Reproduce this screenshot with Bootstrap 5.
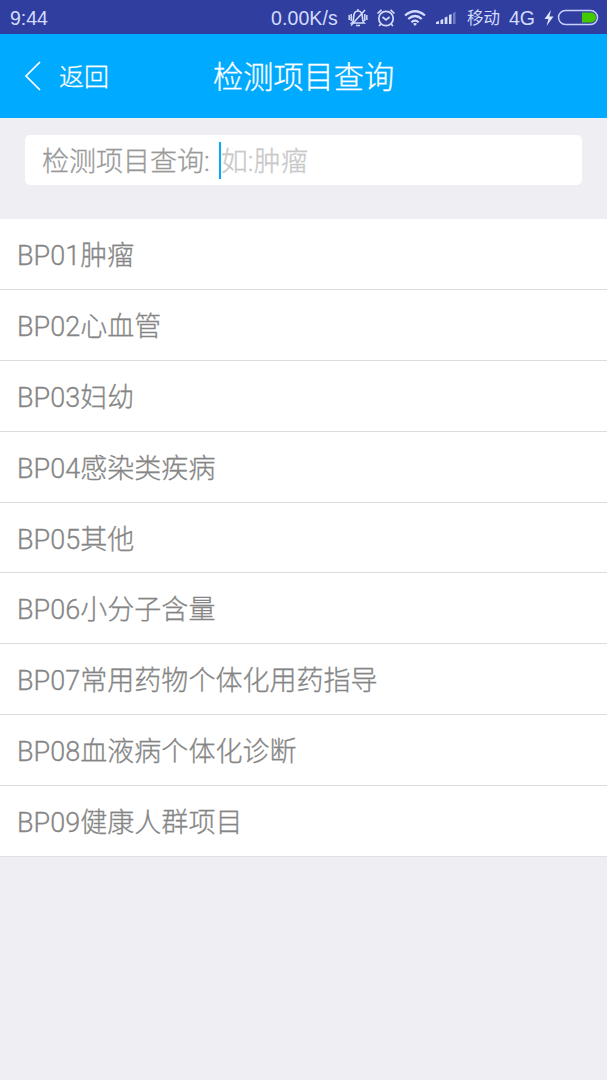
<!DOCTYPE html>
<html lang="zh-CN">
<head>
<meta charset="utf-8">
<meta name="viewport" content="width=device-width, initial-scale=1">
<title>检测项目查询</title>
<link href="https://cdn.jsdelivr.net/npm/bootstrap@5.3.0/dist/css/bootstrap.min.css" rel="stylesheet">
<style>
  body { background: #eeeef3; font-family: Roboto, "Noto Sans CJK SC", sans-serif; min-height: 100vh; font-weight: 300; overflow: hidden; -webkit-text-stroke: .3px currentColor; }
  .status { height: 34px; background: #303f9f; color: #d3dbff; font-size: 19.5px; line-height: 34px; font-weight: 400; padding: 1px 8px 0 10px; -webkit-text-stroke: 0; }
  .status svg { flex: none; }
  .clock, .speed, .net { font-family: "Liberation Sans", sans-serif; white-space: nowrap; }
  .speed { width: 67px; margin-right: 10px; letter-spacing: .1px; }
  .carrier { font-size: 16.5px; margin: 0 9px 0 11px; padding-top: 2px; }
  .net { width: 26px; margin-right: 9px; }
  .topbar { height: 84px; background: #00aaff; color: #fff; }
  .back { width: 200px; padding-left: 24px; font-size: 25px; }
  .back span { margin: 3px 0 0 17px; }
  .heading { font-size: 30.2px; margin-left: 13px; padding-top: 4px; }
  .search-area { height: 101px; padding: 17px 25px 0; }
  .search-box { height: 50px; border-radius: 5px; padding-left: 17px; font-size: 27px; color: #999; line-height: 50px; }
  .search-box .label-text, .search-box .hint { padding-top: 4px; }
  .caret { width: 2px; height: 37px; background: #0af; margin-left: 9px; }
  .hint { color: #c8c8c8; letter-spacing: .2px; }
  .items { --bs-list-group-border-color: #dcdcde; --bs-list-group-color: #858585; }
  .items .list-group-item { height: 70.9px; padding: 5px 17px 0; border-width: 0 0 1px; font-size: 27px; line-height: 1; letter-spacing: .03px; }
</style>
<script defer src="https://cdn.jsdelivr.net/npm/bootstrap@5.3.0/dist/js/bootstrap.bundle.min.js"></script>
</head>
<body>
<div class="status d-flex align-items-center">
  <span class="clock">9:44</span>
  <span class="speed ms-auto">0.00K/s</span>
  <svg width="20" height="20" viewBox="0 0 20 20" fill="none" stroke="#d3dbff" stroke-width="1.7"><path d="M4 15c1.700-1.500 1.500-3 1.600-6C5.800 5 7.500 3 10 3s4.200 2 4.400 6c.1 3 .1 4.500 1.600 6z"/><path d="M8 17.500h4M10 1v2M3 17.500 17 2M1.200 7v5M18.800 7v5M3.200 6v7M16.800 6v7" stroke-width="1.500"/></svg>
  <svg class="ms-2" width="20" height="20" viewBox="0 0 20 20" fill="none" stroke="#d3dbff" stroke-width="1.700"><circle cx="10" cy="10.500" r="7.200"/><path d="m1.500 5.500 4-3.700M18.500 5.500l-4-3.700M6.500 9l3.500 3 3.600-3M4.800 16l-1.700 2M15.200 16l1.700 2"/></svg>
  <svg class="ms-2" width="22" height="18" viewBox="0 0 22 18" fill="none" stroke="#d3dbff" stroke-width="2.200"><path d="M1 6.500Q11-2 21 6.500M4.200 10Q11 4 17.800 10M7.400 13.200Q11 10 14.600 13.200"/><path d="m11 17-2-2.300q2-1.300 4 0z" fill="#d3dbff" stroke="none"/></svg>
  <svg style="margin-left:10px" width="20" height="14" viewBox="0 0 20 14" fill="#d3dbff"><path d="M0 13v-2l3-1v3zM4.500 13V9l2.700-1v5zM8.700 13V6.500l2.700-1V13zM13 13V4l2.500-1v10z"/><path d="M17 13V2l2.500-1.500V13z" opacity=".4"/></svg>
  <span class="carrier">移动</span>
  <span class="net">4G</span>
  <svg width="10" height="18" viewBox="0 0 10 18" fill="#e4e9ff"><path d="M7 1 .5 10h4L2.500 17 9.500 7.500H5.400z"/></svg>
  <svg style="margin-left:3px" width="42" height="18" viewBox="0 0 42 18"><rect x="1.500" y="1.500" width="39" height="14" rx="7" fill="none" stroke="#c8d0ff" stroke-width="1.500"/><path d="M25 3.500h9a5 5 0 0 1 0 10h-9z" fill="#42c900"/></svg>
</div>
<header class="topbar d-flex align-items-center">
  <div class="back d-flex align-items-center">
    <svg width="18" height="30" viewBox="0 0 18 30" fill="none" stroke="#fff" stroke-width="1.700"><path d="M16 1 2 15l14 14"/></svg>
    <span>返回</span>
  </div>
  <h1 class="heading fw-light mb-0">检测项目查询</h1>
</header>
<main>
  <div class="search-area">
    <div class="search-box bg-white d-flex align-items-center"><span class="label-text">检测项目查询:</span><span class="caret"></span><span class="hint">如:肿瘤</span></div>
  </div>
  <ul class="items list-group list-group-flush rounded-0">
    <li class="list-group-item d-flex align-items-center">BP01肿瘤</li>
    <li class="list-group-item d-flex align-items-center">BP02心血管</li>
    <li class="list-group-item d-flex align-items-center">BP03妇幼</li>
    <li class="list-group-item d-flex align-items-center">BP04感染类疾病</li>
    <li class="list-group-item d-flex align-items-center">BP05其他</li>
    <li class="list-group-item d-flex align-items-center">BP06小分子含量</li>
    <li class="list-group-item d-flex align-items-center">BP07常用药物个体化用药指导</li>
    <li class="list-group-item d-flex align-items-center">BP08血液病个体化诊断</li>
    <li class="list-group-item d-flex align-items-center border-bottom">BP09健康人群项目</li>
  </ul>
</main>
</body>
</html>
